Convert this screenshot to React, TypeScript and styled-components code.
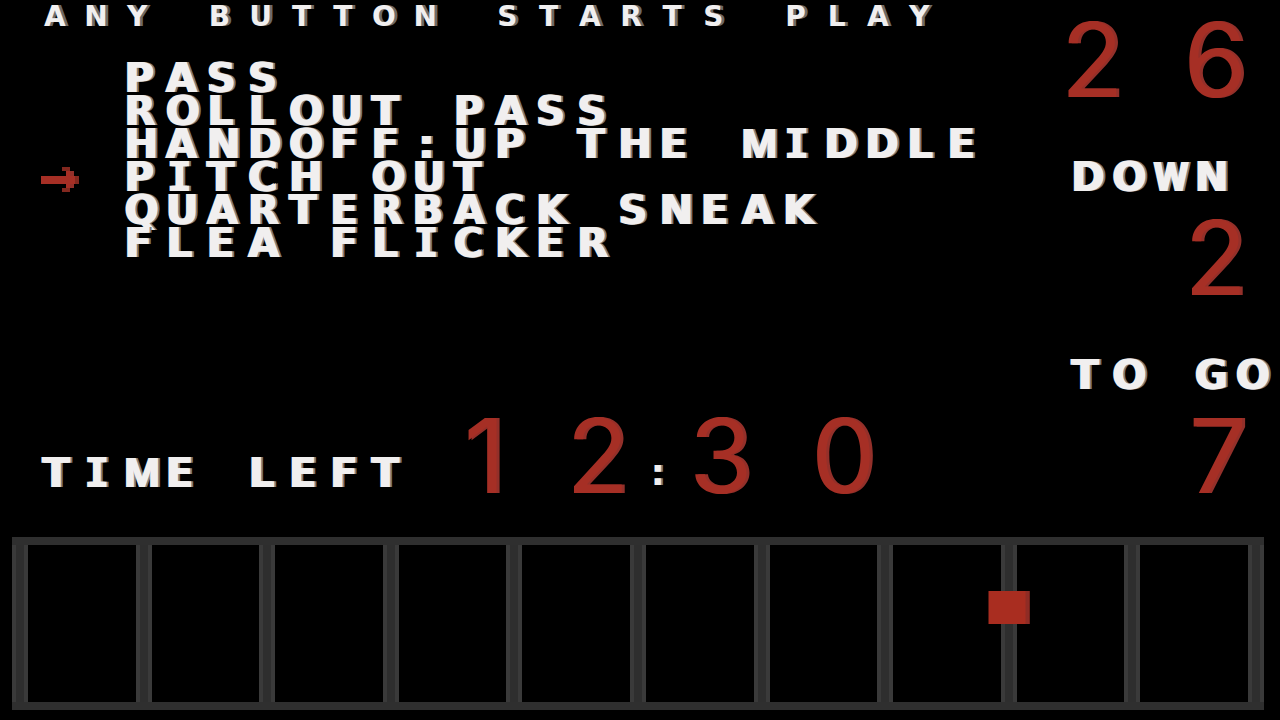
import React, { useState } from 'react';
import styled, { createGlobalStyle } from 'styled-components';

const white = '#f1efef';
const red = '#a62f25';
const digitSize = 66;

const GlobalStyle = createGlobalStyle`
  :root {
    --cell: calc((100vw - 4px) / 31);
  }
  *, *::before, *::after { box-sizing: border-box; }
  body {
    margin: 0;
    background: #000;
    overflow-x: hidden;
  }
`;

const Screen = styled.main`
  display: flex;
  flex-direction: column;
  min-height: 100vh;
  background: #000;
  color: ${white};
  font-family: 'DejaVu Sans', sans-serif;
`;

const Board = styled.div`
  display: grid;
  grid-template-columns: 1fr calc(var(--cell) * 7 + 4px);
`;

const Plays = styled.section`
  display: flex;
  flex-direction: column;
  justify-content: space-between;
  min-width: 0;
`;

const Banner = styled.h1`
  margin: 0 0 29px;
  padding-left: var(--cell);
  font-size: 28px;
  line-height: 33px;
`;

const Menu = styled.ul`
  margin: 0;
  padding: 0 0 0 var(--cell);
  list-style: none;
`;

const Play = styled.button`
  display: flex;
  align-items: center;
  height: 33px;
  padding: 0;
  border: 0;
  background: none;
  color: inherit;
  font: inherit;
  cursor: pointer;
`;

const Marker = styled.span`
  display: flex;
  width: calc(var(--cell) * 2);
  color: ${red};
`;

const Line = styled.span`
  display: block;
  white-space: pre;
  font-size: 40px;
  font-weight: 700;
  line-height: 33px;
  text-shadow: 2px 0 ${white}, 4px 0 #7d7b7b;
`;

const BannerLine = styled(Line)`
  font-size: 28px;
  text-shadow: 3px 0 #6b6a6a;
`;

const faces = {
  plain: 'inherit',
  slab: "'DejaVu Sans Mono', monospace",
  compact: 'Roboto, sans-serif',
};

const Cell = styled.span<{ $face: keyof typeof faces }>`
  display: inline-block;
  width: var(--cell);
  padding-right: 14px;
  text-align: center;
  vertical-align: top;
  font-family: ${(p) => faces[p.$face]};
`;

const Clock = styled.div`
  display: flex;
  align-items: flex-end;
  padding-left: var(--cell);
`;

const ClockLabel = styled.div`
  padding-bottom: 3px;
`;

const Digits = styled.div`
  display: flex;
  color: ${red};
  font-family: Inter, sans-serif;
  font-size: 103px;
  line-height: 75px;
  text-shadow: 3px 0 #93302a;
`;

const ClockDigits = styled(Digits)`
  margin-left: 28px;
`;

const Digit = styled.span`
  width: ${digitSize}px;
  text-align: right;
`;

const Gap = styled.span`
  display: flex;
  align-items: flex-end;
  justify-content: center;
  width: calc(var(--cell) * 3 - ${digitSize}px);
  padding-bottom: 4px;
  color: ${white};
  font-family: 'DejaVu Sans', sans-serif;
  font-size: 36px;
  font-weight: 700;
  line-height: 33px;
  text-shadow: 2px 0 #7d7b7b;
`;

const Status = styled.aside`
  display: flex;
  flex-direction: column;
  padding-top: 22px;
`;

const StatusDigits = styled(Digits)`
  justify-content: flex-end;
  padding-right: 33px;
`;

const StatusLabel = styled.div`
  padding: 64px 0 26px calc(var(--cell) * 2);
`;

const Field = styled.section`
  display: flex;
  flex: 1;
  justify-content: space-between;
  min-height: 173px;
  margin: 44px 16px 10px 12px;
  border: solid #2f2f2f;
  border-width: 8px 0;
`;

const YardLine = styled.div`
  position: relative;
  width: 16px;
  background: #2e2e2e;
  border: solid #3a3a3a;
  border-width: 0 4px;
`;

const Ball = styled.div`
  position: absolute;
  top: 29%;
  left: 50%;
  width: 41px;
  height: 33px;
  background: #a92d20;
  border-right: 4px solid #8f2c25;
  transform: translateX(-50%);
`;

const plays = [
  'PASS',
  'ROLLOUT PASS',
  'HANDOFF:UP THE MIDDLE',
  'PITCH OUT',
  'QUARTERBACK SNEAK',
  'FLEA FLICKER',
];

const faceOf = (char: string): keyof typeof faces => {
  if (char === 'I') return 'slab';
  if (char === 'M' || char === 'W') return 'compact';
  return 'plain';
};

const Cells = ({ text }: { text: string }) => (
  <>
    {text.split('').map((char, i) => (
      <Cell key={i} $face={faceOf(char)}>
        {char}
      </Cell>
    ))}
  </>
);

const Arrow = () => (
  <svg width="38" height="29" viewBox="0 0 38 29" fill="currentColor" shapeRendering="crispEdges" aria-hidden="true">
    <rect x="0" y="13" width="34" height="8" />
    <rect x="34" y="13" width="4" height="8" fill="#83281f" />
    <rect x="21" y="4" width="8" height="4" fill="#83281f" />
    <rect x="25" y="8" width="4" height="5" />
    <rect x="29" y="8" width="4" height="5" fill="#93302a" />
    <rect x="25" y="21" width="4" height="4" />
    <rect x="29" y="21" width="4" height="4" fill="#93302a" />
    <rect x="21" y="25" width="8" height="4" fill="#83281f" />
  </svg>
);

const Reading = ({ value }: { value: string }) => (
  <StatusDigits>
    {value.split('').map((digit, i) => (
      <React.Fragment key={i}>
        {i > 0 && <Gap />}
        <Digit>{digit}</Digit>
      </React.Fragment>
    ))}
  </StatusDigits>
);

export default function App() {
  const [selected, setSelected] = useState(3);

  return (
    <>
      <GlobalStyle />
      <Screen>
        <Board>
          <Plays>
            <div>
              <Banner>
                <BannerLine>
                  <Cells text="ANY BUTTON STARTS PLAY" />
                </BannerLine>
              </Banner>
              <Menu>
                {plays.map((play, i) => (
                  <li key={play}>
                    <Play type="button" aria-label={play} aria-pressed={i === selected} onClick={() => setSelected(i)}>
                      <Marker>{i === selected && <Arrow />}</Marker>
                      <Line>
                        <Cells text={play} />
                      </Line>
                    </Play>
                  </li>
                ))}
              </Menu>
            </div>
            <Clock>
              <ClockLabel>
                <Line>
                  <Cells text="TIME LEFT" />
                </Line>
              </ClockLabel>
              <ClockDigits>
                <Digit>1</Digit>
                <Gap />
                <Digit>2</Digit>
                <Gap>:</Gap>
                <Digit>3</Digit>
                <Gap />
                <Digit>0</Digit>
              </ClockDigits>
            </Clock>
          </Plays>
          <Status>
            <Reading value="26" />
            <StatusLabel>
              <Line>
                <Cells text="DOWN" />
              </Line>
            </StatusLabel>
            <Reading value="2" />
            <StatusLabel>
              <Line>
                <Cells text="TO GO" />
              </Line>
            </StatusLabel>
            <Reading value="7" />
          </Status>
        </Board>
        <Field aria-label="Field position">
          {Array.from({ length: 11 }, (_, i) => (
            <YardLine key={i}>{i === 8 && <Ball />}</YardLine>
          ))}
        </Field>
      </Screen>
    </>
  );
}
